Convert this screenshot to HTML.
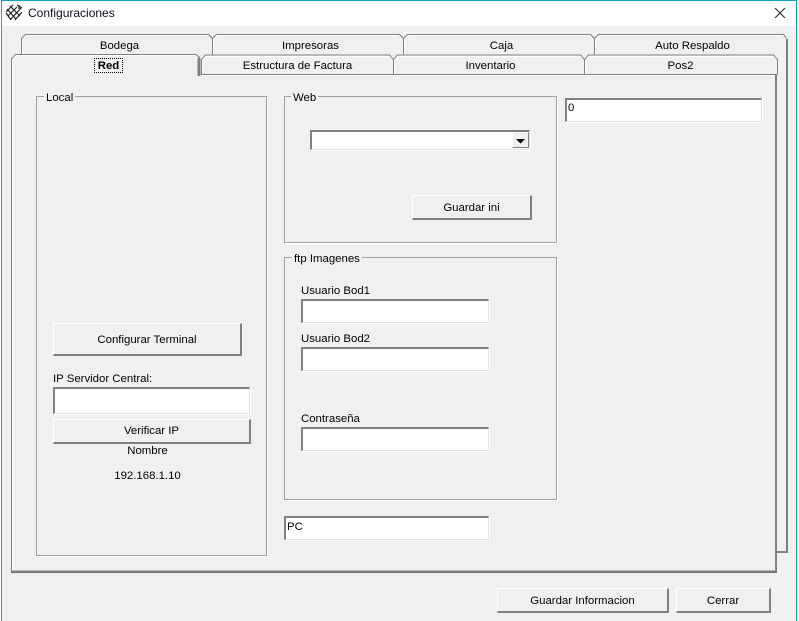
<!DOCTYPE html>
<html><head><meta charset="utf-8">
<style>
html,body{margin:0;padding:0;width:799px;height:621px;overflow:hidden;background:#fff}
*{box-sizing:border-box}
#w{position:absolute;left:1px;top:0;width:796px;height:621px;background:#f0f0f0;border-left:1px solid #2a9fc0;border-right:1px solid #10a0c0;border-top:1px solid #10a0c0}
.a{position:absolute}
.t{position:absolute;font:11.4px/16px "Liberation Sans",sans-serif;color:#000;white-space:nowrap}
.c{text-align:center}
.inp{position:absolute;background:#fff;border-top:2px solid #808080;border-left:2px solid #808080;border-right:1px solid #e3e3e3;border-bottom:1px solid #e3e3e3;box-shadow:1px 1px 0 #fff;font:11.4px/16px "Liberation Sans",sans-serif;padding:1px 0 0 1px;color:#000}
.btn{position:absolute;background:#f0f0f0;border-top:1px solid #fff;border-left:1px solid #fff;border-right:2px solid #808080;border-bottom:2px solid #808080;font:11.4px/14px "Liberation Sans",sans-serif;color:#000;display:flex;align-items:center;justify-content:center;padding-top:2px}
.grp{position:absolute;border:1px solid #a0a0a0;box-shadow:1px 1px 0 #fff}
.lg{position:absolute;background:#f0f0f0;font:11.4px/14px "Liberation Sans",sans-serif;color:#000;padding:1px 2px 0;white-space:nowrap}
</style></head><body>
<div id="w"></div>
<div class="a" style="left:2px;top:1px;width:794px;height:25px;background:#fff"></div>
<svg class="a" style="left:5px;top:4px" width="18" height="18" viewBox="0 0 18 18" fill="none" stroke="#222" stroke-width="1.2"><path d="M1 8L8 1M3 12L12 3M6 15L16 4M2 5L11 15M5 2L15 12M1 9L6 16M10 16L17 8M12 1l5 3M14 1v4"/></svg>
<div class="t" style="left:28px;top:5px;color:#0a0a20;font-size:12px">Configuraciones</div>
<svg class="a" style="left:774px;top:7px" width="12" height="12" fill="none" stroke="#222" stroke-width="1"><path d="M1 1L11 11M11 1L1 11"/></svg>

<svg class="a" style="left:0;top:0" width="799" height="621" fill="none" shape-rendering="crispEdges">
<path d="M21 54V38L25 34H208L212 38V54M212 54V38L216 34H399L403 38V54M403 54V38L407 34H590L594 38V54M594 54V38L598 34H783L786 38" stroke="#808080" stroke-width="1" transform="translate(.5 .5)"/>
<path d="M787 39V553" stroke="#808080" stroke-width="2"/>
<path d="M777 552H788" stroke="#808080" stroke-width="2"/>
<path d="M22 54V39L26 35H208M213 54V39L217 35H399M404 54V39L408 35H590M595 54V39L599 35H783" stroke="#fff" transform="translate(.5 .5)"/>
<path d="M201 74V59L205 54.5H389L393 59V74M393 74V59L397 54.5H580L584 59V74M584 74V59L588 54.5H773L777 59V74" stroke="#808080" transform="translate(.5 .5)"/>
<path d="M202 73V60L206 56H389M394 73V60L398 56H580M585 73V60L589 56H773" stroke="#fff" transform="translate(.5 .5)"/>
<path d="M201 74H775" stroke="#808080" transform="translate(0 .5)"/>
<path d="M201 75.5H775" stroke="#fff"/>
<path d="M11.5 572V59L15.5 54.5H196L200 58" stroke="#808080"/>
<path d="M12.5 571V60L16.5 55.5H196" stroke="#fff"/>
<path d="M199 58V76" stroke="#808080" stroke-width="3"/>
<path d="M776 74V573" stroke="#808080" stroke-width="2"/>
<path d="M11 571.5H777" stroke="#808080" stroke-width="2"/>
<path d="M11 572.5H777" stroke="#707070"/>
</svg>

<div class="t c" style="left:21px;top:38px;width:197px">Bodega</div>
<div class="t c" style="left:212px;top:38px;width:197px">Impresoras</div>
<div class="t c" style="left:403px;top:38px;width:197px">Caja</div>
<div class="t c" style="left:594px;top:38px;width:197px">Auto Respaldo</div>
<div class="t c" style="left:201px;top:58px;width:193px">Estructura de Factura</div>
<div class="t c" style="left:393px;top:58px;width:195px">Inventario</div>
<div class="t c" style="left:584px;top:58px;width:193px">Pos2</div>
<div class="t" style="left:94px;top:58px;width:29px;height:15px;border:1px dotted #000;font-weight:bold;text-align:center;line-height:15px">Red</div>

<div class="grp" style="left:36px;top:96px;width:231px;height:460px"></div>
<div class="lg" style="left:44px;top:90px">Local</div>
<div class="grp" style="left:284px;top:96px;width:273px;height:147px"></div>
<div class="lg" style="left:291px;top:90px">Web</div>
<div class="grp" style="left:284px;top:257px;width:273px;height:243px"></div>
<div class="lg" style="left:292px;top:251px">ftp Imagenes</div>

<div class="inp" style="left:565px;top:98px;width:197px;height:24px;padding-top:0">0</div>

<div class="inp" style="left:310px;top:130px;width:220px;height:20px"></div>
<div class="a" style="left:512px;top:132px;width:17px;height:16px;background:#f0f0f0;border-top:1px solid #fff;border-left:1px solid #fff;border-right:1px solid #808080;border-bottom:1px solid #808080"></div>
<svg class="a" style="left:516px;top:139px" width="10" height="5"><path d="M0 0H9L4.5 4.5Z" fill="#000"/></svg>

<div class="btn" style="left:412px;top:195px;width:120px;height:25px">Guardar ini</div>

<div class="t" style="left:301px;top:283px">Usuario Bod1</div>
<div class="inp" style="left:301px;top:299px;width:188px;height:24px"></div>
<div class="t" style="left:301px;top:331px">Usuario Bod2</div>
<div class="inp" style="left:301px;top:347px;width:188px;height:24px"></div>
<div class="t" style="left:301px;top:411px">Contraseña</div>
<div class="inp" style="left:301px;top:427px;width:188px;height:24px"></div>
<div class="inp" style="left:284px;top:516px;width:205px;height:24px;padding-top:1px">PC</div>

<div class="btn" style="left:53px;top:323px;width:189px;height:33px">Configurar Terminal</div>
<div class="t" style="left:53px;top:371px">IP Servidor Central:</div>
<div class="inp" style="left:53px;top:387px;width:197px;height:27px"></div>
<div class="btn" style="left:53px;top:419px;width:198px;height:25px;padding-top:0">Verificar IP</div>
<div class="t c" style="left:53px;top:443px;width:189px">Nombre</div>
<div class="t c" style="left:53px;top:468px;width:189px">192.168.1.10</div>

<div class="btn" style="left:497px;top:588px;width:172px;height:25px">Guardar Informacion</div>
<div class="btn" style="left:676px;top:588px;width:95px;height:25px">Cerrar</div>
</body></html>
